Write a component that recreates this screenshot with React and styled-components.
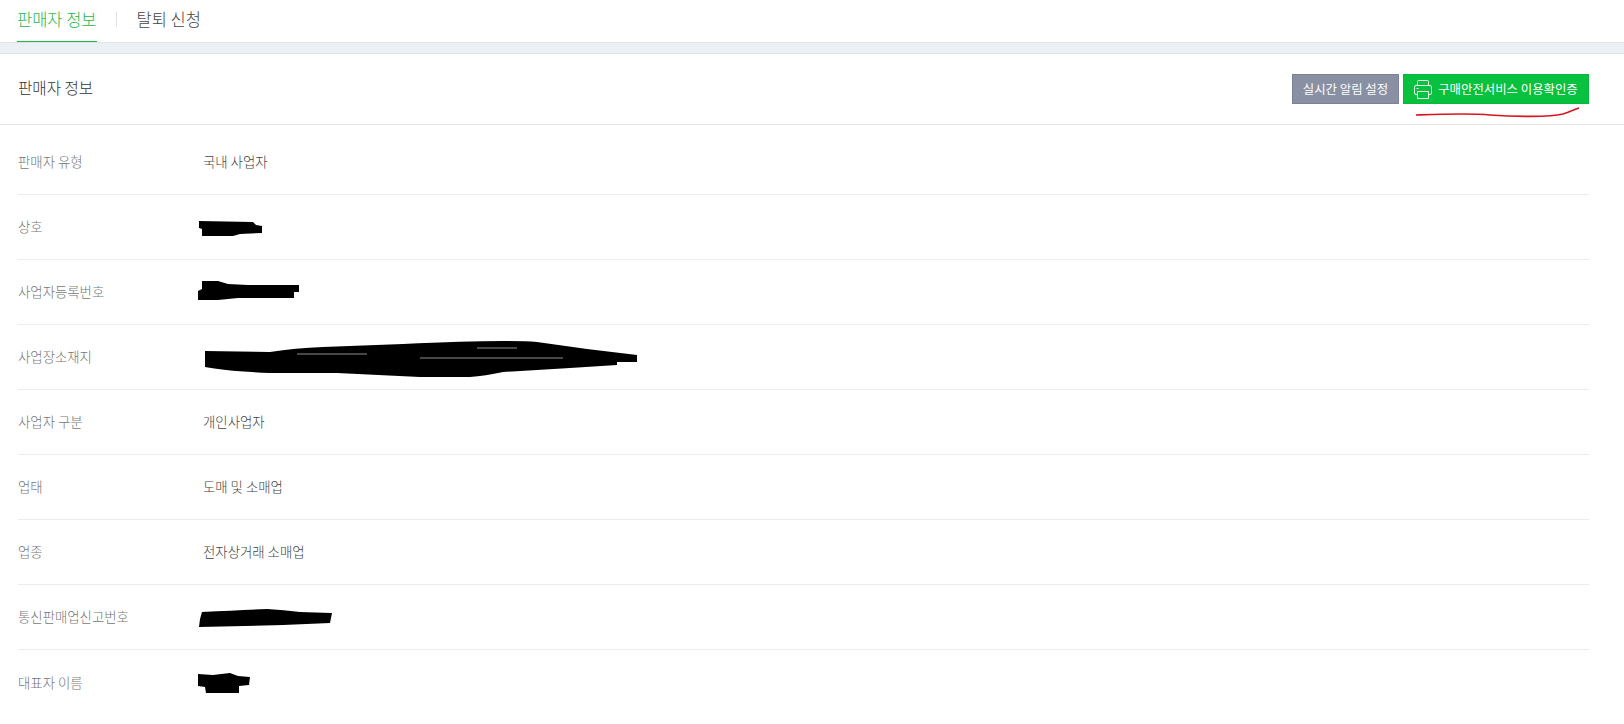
import React from 'react'
import styled, { createGlobalStyle } from 'styled-components'

const Global = createGlobalStyle`
  html, body { margin: 0; padding: 0; background: #fff; }
  body { font-family: "Noto Sans CJK KR", "Noto Sans", sans-serif; overflow: hidden; }
`

const Page = styled.div`
  width: 1624px;
  height: 724px;
  overflow: hidden;
`

const Tabs = styled.div`
  display: flex;
  align-items: stretch;
  height: 42px;
  padding-left: 17px;
  border-bottom: 1px solid #dfe3e6;
`

const Tab = styled.div`
  display: flex;
  align-items: center;
  height: 42px;
  padding-bottom: 4px;
  box-sizing: border-box;
  font-size: 16.5px;
  font-weight: 300;
  color: ${p => (p.$active ? '#19b84c' : '#444')};
  border-bottom: ${p => (p.$active ? '1px solid #19b84c' : 'none')};
`

const TabDivider = styled.span`
  width: 1px;
  height: 15px;
  background: #e2e2e2;
  margin: 12px 20px 0 19px;
`

const Band = styled.div`
  height: 10px;
  background: #ebf0f4;
  border-bottom: 1px solid #dce1e4;
`

const Header = styled.div`
  display: flex;
  align-items: center;
  justify-content: space-between;
  height: 70px;
  padding: 0 35px 0 18px;
  border-bottom: 1px solid #e4e4e4;
`

const Title = styled.h2`
  margin: 0 0 4px;
  font-size: 15.6px;
  font-weight: 300;
  color: #333;
`

const Actions = styled.div`
  position: relative;
  display: flex;
  gap: 4px;
`

const Button = styled.button`
  display: flex;
  align-items: center;
  justify-content: center;
  gap: 6px;
  height: 30px;
  width: ${p => p.$width}px;
  padding: 0;
  border: 1px solid ${p => p.$border};
  background: ${p => p.$bg};
  color: #fff;
  font-family: inherit;
  font-size: 12.4px;
`

const Underline = styled.svg`
  position: absolute;
  right: 8px;
  top: 33px;
`

const List = styled.dl`
  margin: 0;
  padding: 5px 35px 0 18px;
`

const Row = styled.div`
  display: flex;
  align-items: center;
  height: 65px;
  padding-bottom: 2px;
  box-sizing: border-box;
  border-bottom: 1px solid #ececec;
  &:last-child { border-bottom: none; }
`

const Label = styled.dt`
  width: 185px;
  font-size: 13.4px;
  font-weight: 300;
  color: #777;
`

const Value = styled.dd`
  position: relative;
  margin: 0;
  font-size: 13.4px;
  font-weight: 300;
  color: #444;
`

const Scribble = styled.svg`
  position: absolute;
  left: ${p => p.$left}px;
  top: ${p => p.$top}px;
`

const PrinterIcon = () => (
  <svg width="18" height="19" viewBox="0 0 18 19" fill="none" stroke="#fff" strokeWidth="0.9">
    <path d="M3.5 5.5V1.5a1 1 0 0 1 1-1h9a1 1 0 0 1 1 1v4" />
    <path d="M3.5 14.5H2A1.5 1.5 0 0 1 .5 13V7A1.5 1.5 0 0 1 2 5.5h14A1.5 1.5 0 0 1 17.5 7v6a1.5 1.5 0 0 1-1.5 1.5h-1.5" />
    <path d="M3.5 11.5h11v7h-11z" />
    <path d="M2.5 8.5h2" />
  </svg>
)

const marks = {
  name: {
    left: -4, top: -6, w: 64, h: 17,
    d: 'M0 1 L54 2 L57 5 L63 6 L63 13 L41 14 L34 16 L3 16 L3 9 L0 8 Z',
  },
  regno: {
    left: -5, top: -10, w: 102, h: 20,
    d: 'M4 0 L20 0 L30 3 L50 4 L101 4 L101 11 L96 11 L96 17 L40 17 L20 19 L0 19 L0 10 L4 8 Z',
  },
  address: {
    left: 2, top: -16, w: 433, h: 38,
    d: 'M0 11 L65 12 Q90 8 118 7 L198 4 Q260 1 298 1 Q320 1 332 2 L382 9 L432 15 L432 22 L412 22 L412 25 L365 28 L298 32 Q280 36 265 37 L215 37 L132 33 L65 33 Q20 31 0 27 Z',
    streaks: ['M92 14h70', 'M215 18h143', 'M272 8h40'],
  },
  telecom: {
    left: -4, top: -7, w: 134, h: 19,
    d: 'M3 3 Q40 1 68 0 Q85 1 101 3 L133 4 L131 14 L84 16 L0 18 L1 10 Z',
  },
  owner: {
    left: -5, top: -9, w: 53, h: 21,
    d: 'M0 1 L15 2 L32 0 L40 3 L52 4 L51 12 L41 13 L41 20 L8 20 L7 14 L0 13 Z',
  },
}

const rows = [
  { label: '판매자 유형', value: '국내 사업자' },
  { label: '상호', mark: 'name' },
  { label: '사업자등록번호', mark: 'regno' },
  { label: '사업장소재지', mark: 'address' },
  { label: '사업자 구분', value: '개인사업자' },
  { label: '업태', value: '도매 및 소매업' },
  { label: '업종', value: '전자상거래 소매업' },
  { label: '통신판매업신고번호', mark: 'telecom' },
  { label: '대표자 이름', mark: 'owner' },
]

const Mark = ({ name }) => {
  const m = marks[name]
  return (
    <Scribble $left={m.left} $top={m.top} width={m.w} height={m.h} viewBox={`0 0 ${m.w} ${m.h}`}>
      <path d={m.d} fill="#000" />
      {m.streaks && m.streaks.map(d => <path key={d} d={d} stroke="#fff" strokeWidth="0.8" opacity="0.7" />)}
    </Scribble>
  )
}

export default function App() {
  return (
    <Page>
      <Global />
      <Tabs>
        <Tab $active>판매자 정보</Tab>
        <TabDivider />
        <Tab>탈퇴 신청</Tab>
      </Tabs>
      <Band />
      <Header>
        <Title>판매자 정보</Title>
        <Actions>
          <Button $width={107} $bg="#8a90a3" $border="#7d8396">실시간 알림 설정</Button>
          <Button $width={186} $bg="#07c13f" $border="#06b83b">
            <PrinterIcon />
            구매안전서비스 이용확인증
          </Button>
          <Underline width="166" height="12" viewBox="0 0 166 12" fill="none">
            <path d="M1 8 C30 7 55 6 75 8 C100 10 135 10 148 7 C155 5 158 3 164 1" stroke="#dc1420" strokeWidth="1.6" />
          </Underline>
        </Actions>
      </Header>
      <List>
        {rows.map(r => (
          <Row key={r.label}>
            <Label>{r.label}</Label>
            <Value>{r.mark ? <Mark name={r.mark} /> : r.value}</Value>
          </Row>
        ))}
      </List>
    </Page>
  )
}
